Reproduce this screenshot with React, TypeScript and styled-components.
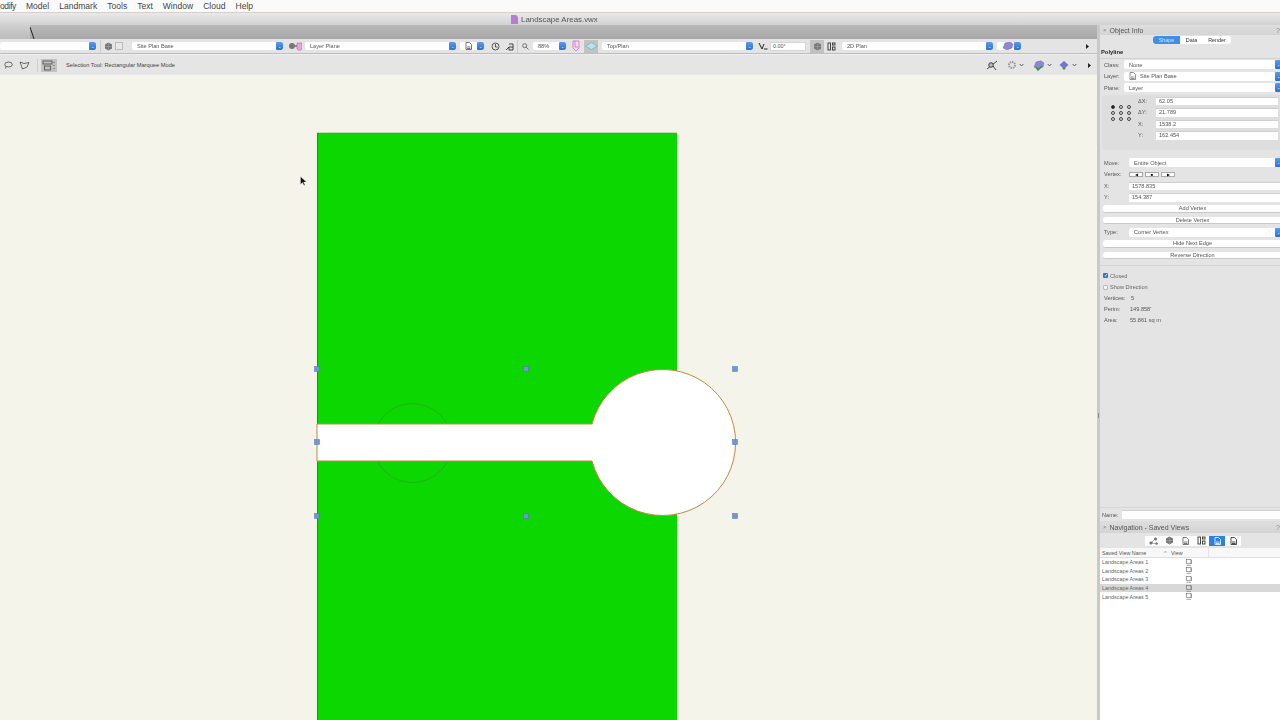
import React from 'react';
import styled, { createGlobalStyle } from 'styled-components';

const GlobalStyle = createGlobalStyle`
  html, body {
    margin: 0;
    padding: 0;
    width: 1280px;
    height: 720px;
    overflow: hidden;
    background: #f5f4ea;
    font-family: "Liberation Sans", Arial, sans-serif;
    color: #333;
  }
  * { box-sizing: border-box; }
`;

const Root = styled.div`
  width: 1280px;
  height: 720px;
  display: flex;
  flex-direction: column;
  overflow: hidden;
  filter: blur(0.35px);
`;

const MenuBar = styled.div`
  height: 12px;
  flex: none;
  display: flex;
  align-items: center;
  gap: 10px;
  background: #fbfafa;
  font-size: 8.5px;
  color: #444;
`;

const MenuItem = styled.span<{ $tight?: boolean }>`
  letter-spacing: ${p => (p.$tight ? '-0.4px' : '0.02px')};
`;

const TitleBar = styled.div`
  height: 13px;
  flex: none;
  display: flex;
  align-items: center;
  gap: 3px;
  padding-left: 511px;
  border-top: 1px solid #d6d0cd;
  background: linear-gradient(#e9e9e9, #d2d2d2);
  font-size: 7.9px;
  color: #555;
`;

const Main = styled.div`
  flex: 1;
  display: flex;
  min-height: 0;
`;

const Workspace = styled.div`
  width: 1097px;
  flex: none;
  display: flex;
  flex-direction: column;
`;

const TabStrip = styled.div`
  height: 14px;
  flex: none;
  display: flex;
  background: linear-gradient(#b9b9b9, #a7a7a7);
`;

const ActiveTab = styled.div`
  width: 30px;
  background: linear-gradient(#cfcfcf, #bcbcbc);
`;

const ViewBar = styled.div`
  height: 15px;
  flex: none;
  display: flex;
  align-items: center;
  background: #e4e4e4;
  border-bottom: 1px solid #bdbdbd;
`;

const ModeBar = styled.div`
  height: 21px;
  flex: none;
  display: flex;
  align-items: center;
  background: #e5e5e5;
  border-top: 1px solid #efefef;
`;

const Hint = styled.span`
  margin-left: 9px;
  font-size: 5.7px;
  color: #444;
  white-space: nowrap;
`;

const Spacer = styled.div`
  flex: 1;
`;

const Slot = styled.div<{ $ml?: number; $w: number; $active?: boolean }>`
  flex: none;
  display: flex;
  align-items: center;
  justify-content: center;
  width: ${p => p.$w}px;
  height: 13px;
  margin-left: ${p => p.$ml ?? 0}px;
  background: ${p => (p.$active ? '#c2c2c2' : 'transparent')};
`;

const Divider = styled.div<{ $ml: number }>`
  width: 1px;
  height: 13px;
  flex: none;
  margin-left: ${p => p.$ml}px;
  background: #cdcdcd;
`;

const Select = styled.div<{ $w: number; $ml?: number }>`
  flex: none;
  display: flex;
  align-items: center;
  width: ${p => p.$w}px;
  height: 8.5px;
  margin-left: ${p => p.$ml ?? 0}px;
  padding-left: 5px;
  border-radius: 2px;
  overflow: hidden;
  background: #fff;
  font-size: 5.6px;
  color: #555;
  white-space: nowrap;
`;

const SelectText = styled.span`
  flex: 1;
  display: flex;
  align-items: center;
`;

const Stepper = styled.span`
  flex: none;
  width: 7px;
  align-self: stretch;
  display: flex;
  align-items: center;
  justify-content: center;
  border-radius: 1px;
  background: linear-gradient(#5a9be8, #2e72d0);
  color: #fff;
  font-size: 4px;
`;

const PlainInput = styled.div<{ $w: number; $ml?: number }>`
  flex: none;
  width: ${p => p.$w}px;
  height: 9px;
  margin-left: ${p => p.$ml ?? 0}px;
  padding-left: 2px;
  background: #fff;
  border: 1px solid #d5d5d5;
  font-size: 5.4px;
  line-height: 7px;
  color: #555;
`;

const Canvas = styled.div`
  flex: 1;
  min-height: 0;
  background: #f5f4ea;
`;

const Drawing = styled.svg`
  display: block;
`;

const Sash = styled.div`
  width: 3px;
  flex: none;
  display: flex;
  align-items: center;
  justify-content: center;
  padding-top: 86px;
  background: #c9c9c9;
`;

const SashGrip = styled.span`
  width: 1px;
  height: 5px;
  background: #8f8f8f;
`;

const Palettes = styled.div`
  width: 180px;
  flex: none;
  display: flex;
  flex-direction: column;
  overflow: hidden;
  background: #e4e4e4;
`;

const PaletteHead = styled.div<{ $h: number }>`
  height: ${p => p.$h}px;
  flex: none;
  display: flex;
  align-items: center;
  gap: 3px;
  padding-left: 3px;
  background: linear-gradient(#dedede, #d4d4d4);
  font-size: 7px;
  color: #555;
`;

const CloseMark = styled.span`
  font-size: 6px;
  color: #888;
`;

const HelpMark = styled.span`
  margin-left: auto;
  color: #8a8a8a;
`;

const InfoBody = styled.div`
  width: 182px;
  flex: 1;
  min-height: 0;
  display: flex;
  flex-direction: column;
`;

const SegmentRow = styled.div`
  flex: none;
  display: flex;
  align-items: center;
  height: 10px;
  padding-left: 53px;
`;

const Segments = styled.div`
  display: flex;
  height: 8px;
  border-radius: 3px;
  overflow: hidden;
  background: #fff;
  font-size: 5.4px;
  line-height: 8px;
  text-align: center;
  color: #333;
`;

const Segment = styled.span<{ $w: number; $on?: boolean }>`
  width: ${p => p.$w}px;
  background: ${p => (p.$on ? '#3f8fe6' : 'transparent')};
  color: ${p => (p.$on ? '#cfe4fa' : '#333')};
`;

const ShapeName = styled.div`
  height: 12px;
  flex: none;
  margin-top: 2px;
  padding: 2px 0 0 1px;
  border-bottom: 1px solid #d2d2d2;
  font-size: 5.8px;
  font-weight: bold;
  color: #222;
`;

const PropRow = styled.div<{ $h?: number }>`
  flex: none;
  display: flex;
  align-items: center;
  height: ${p => p.$h ?? 11.5}px;
  padding-left: 4px;
  font-size: 5.6px;
  color: #555;
  white-space: nowrap;
`;

const PropLabel = styled.span<{ $w: number }>`
  flex: none;
  width: ${p => p.$w}px;
`;

const Field = styled.div<{ $w: number }>`
  flex: none;
  width: ${p => p.$w}px;
  height: 8.5px;
  padding-left: 3px;
  background: #fff;
  border-top: 1px solid #cfcfcf;
  line-height: 7px;
  color: #555;
`;

const PropSelect = styled(Select)`
  flex: 1;
  width: auto;
  height: 9px;
  padding-left: 5px;
`;

const SelectIcon = styled.span`
  display: flex;
  margin-right: 4px;
`;

const GroupBox = styled.div`
  height: 55px;
  flex: none;
  display: flex;
  margin: 1.5px 0 7px 2px;
  background: #dedede;
  border-radius: 2px;
`;

const AlignGrid = styled.div`
  flex: none;
  width: 36px;
  display: grid;
  grid-template-columns: repeat(3, 4px);
  grid-auto-rows: 4px;
  gap: 2px 4px;
  align-content: start;
  padding: 10px 0 0 9px;
`;

const AlignDot = styled.span<{ $on?: boolean }>`
  width: 4px;
  height: 4px;
  border-radius: 50%;
  border: 0.8px solid #444;
  background: ${p => (p.$on ? '#111' : 'transparent')};
`;

const Coords = styled.div`
  flex: 1;
`;

const CoordRow = styled(PropRow)`
  padding-left: 0;
`;

const VertexButtons = styled.div`
  display: flex;
  gap: 2px;
`;

const VertexButton = styled.span`
  width: 14px;
  height: 5.5px;
  display: flex;
  align-items: center;
  justify-content: center;
  background: #fff;
  border: 0.5px solid #aaa;
  font-size: 4px;
  color: #111;
`;

const WideButton = styled.div`
  flex: none;
  height: 7.5px;
  margin: 2.2px 0 2px 3px;
  width: 179px;
  border-radius: 3px;
  background: #fff;
  border-bottom: 1px solid #c8c8c8;
  font-size: 5.6px;
  line-height: 7px;
  text-align: center;
  color: #555;
`;

const Rule = styled.div`
  flex: none;
  height: 1px;
  margin: 4px 0;
  background: #d4d4d4;
`;

const CheckRow = styled.div`
  flex: none;
  display: flex;
  align-items: center;
  gap: 2px;
  height: 11.3px;
  padding-left: 3px;
  font-size: 5.6px;
  color: #666;
`;

const CheckBox = styled.span<{ $on?: boolean }>`
  width: 5px;
  height: 5px;
  display: flex;
  align-items: center;
  justify-content: center;
  border-radius: 1px;
  background: ${p => (p.$on ? '#2f78d2' : '#f6f6f6')};
  border: ${p => (p.$on ? 'none' : '0.5px solid #bbb')};
  color: #fff;
  font-size: 4.5px;
`;

const Filler = styled.div`
  flex: 1;
`;

const NameRow = styled(PropRow)`
  height: 14px;
  padding-left: 2px;
  border-top: 1px solid #d6d6d6;
`;

const NavBody = styled.div`
  flex: none;
  height: 187px;
  display: flex;
  flex-direction: column;
  background: #fff;
`;

const NavTools = styled.div`
  height: 15px;
  flex: none;
  display: flex;
  align-items: center;
  padding-left: 45px;
  background: #e4e4e4;
`;

const NavButton = styled.span<{ $on?: boolean }>`
  width: 16px;
  height: 10px;
  display: flex;
  align-items: center;
  justify-content: center;
  background: ${p => (p.$on ? '#2f80e4' : '#fff')};
`;

const TableHead = styled.div`
  height: 10px;
  flex: none;
  display: flex;
  align-items: center;
  padding-left: 2px;
  background: #f8f8f8;
  border-bottom: 1px solid #e0e0e0;
  font-size: 5.4px;
  color: #555;
`;

const NameCol = styled.span`
  width: 62px;
  flex: none;
`;

const SortMark = styled.span`
  width: 7px;
  flex: none;
  color: #777;
`;

const ViewCol = styled.span`
  width: 38px;
  flex: none;
  height: 100%;
  line-height: 10px;
  border-right: 1px solid #e4e4e4;
`;

const ViewRow = styled.div<{ $on?: boolean }>`
  height: 8.6px;
  flex: none;
  display: flex;
  align-items: center;
  padding-left: 2px;
  background: ${p => (p.$on ? '#d8d8d8' : '#fff')};
  font-size: 5.4px;
  color: #666;
`;

const RowName = styled.span`
  width: 84px;
  flex: none;
`;

const MENU = ['Model', 'Landmark', 'Tools', 'Text', 'Window', 'Cloud', 'Help'];
const VIEWS = [1, 2, 3, 4, 5];
const HANDLES = [
  [317, 294], [526, 294], [735, 294],
  [317, 367], [735, 367],
  [317, 441], [526, 441], [735, 441],
];
const DELTAS = [
  ['ΔX:', '62.05'],
  ['ΔY:', '21.789'],
  ['X:', '1538.2'],
  ['Y:', '162.454'],
];

const Sheet = ({ color = '#555' }: { color?: string }) => (
  <svg width="7" height="8" viewBox="0 0 7 8" fill="none" stroke={color} strokeWidth="0.8">
    <path d="M1 .5h3.5L6.5 2.5v5H1z" />
    <path d="M2 5h3.5M2 6.5h3.5" />
  </svg>
);

const ViewMark = () => (
  <svg width="6" height="7" viewBox="0 0 6 7" fill="none" stroke="#666" strokeWidth="0.6">
    <rect x=".5" y=".5" width="4.5" height="4" />
    <path d="M.5 6.3h4.5M5.4 1v4" />
  </svg>
);

const Globe = () => (
  <svg width="9" height="9" viewBox="0 0 9 9">
    <path d="M4.5.5 8 2.5v4L4.5 8.5 1 6.5v-4z" fill="#777" />
    <path d="M1 4.5h7M4.5.5v8" stroke="#aaa" strokeWidth="0.5" />
  </svg>
);

const Grid = () => (
  <svg width="9" height="9" viewBox="0 0 9 9" fill="none" stroke="#333" strokeWidth="0.9">
    <rect x="1" y="1" width="2.5" height="7" />
    <rect x="5.5" y="1" width="2.5" height="2" />
    <rect x="5.5" y="5" width="2.5" height="3" />
  </svg>
);

const Nodes = () => (
  <svg width="9" height="8" viewBox="0 0 9 8" fill="#777" stroke="#777" strokeWidth="0.6">
    <path d="M2 6 6 2M2 6l5 .5" fill="none" />
    <circle cx="2" cy="6" r="1.3" />
    <circle cx="6.5" cy="2" r="1.3" />
    <circle cx="7.5" cy="6.5" r="1" />
  </svg>
);

const Blob = ({ fill, check }: { fill: string; check?: boolean }) => (
  <svg width="12" height="11" viewBox="0 0 12 11">
    <path d="M3 2 8 .8 11 3 10 7 5 9 1 7z" fill={fill} stroke="#5d5d80" strokeWidth="0.4" />
    {check && <path d="M3 7l2 3 4-4" fill="none" stroke="#2f9a3c" strokeWidth="1.5" />}
  </svg>
);

const Chevron = () => (
  <svg width="5" height="4" viewBox="0 0 5 4" fill="none" stroke="#444" strokeWidth="0.8">
    <path d="M.7 1 2.5 3 4.3 1" />
  </svg>
);

const RightArrow = () => (
  <svg width="3" height="5" viewBox="0 0 3 5"><path d="M0 0 3 2.5 0 5z" fill="#222" /></svg>
);

const Pick = ({ w, ml, children }: { w: number; ml?: number; children: React.ReactNode }) => (
  <Select $w={w} $ml={ml}>
    <SelectText>{children}</SelectText>
    <Stepper>⌄</Stepper>
  </Select>
);

const Prop = ({ label, value, icon, lw = 20 }: { label: string; value: string; icon?: boolean; lw?: number }) => (
  <PropRow>
    <PropLabel $w={lw}>{label}</PropLabel>
    <PropSelect $w={0}>
      {icon && <SelectIcon><Sheet color="#777" /></SelectIcon>}
      <SelectText>{value}</SelectText>
      <Stepper>⌄</Stepper>
    </PropSelect>
  </PropRow>
);

const App = () => (
  <>
    <GlobalStyle />
    <Root>
      <MenuBar>
        <MenuItem $tight>odify</MenuItem>
        {MENU.map(m => <MenuItem key={m}>{m}</MenuItem>)}
      </MenuBar>
      <TitleBar>
        <svg width="7" height="9" viewBox="0 0 7 9"><path d="M0 0h5l2 2v7H0z" fill="#b57ccf" /></svg>
        Landscape Areas.vwx
      </TitleBar>
      <Main>
        <Workspace>
          <TabStrip>
            <ActiveTab />
            <svg width="6" height="14" viewBox="0 0 6 14">
              <path d="M0 2 4 14" stroke="#222" strokeWidth="1" />
            </svg>
          </TabStrip>
          <ViewBar>
            <Pick w={96}>{''}</Pick>
            <Divider $ml={4} />
            <Slot $w={9} $ml={3}><Globe /></Slot>
            <Slot $w={9} $ml={1}>
              <svg width="8" height="8" viewBox="0 0 8 8"><rect x=".5" y=".5" width="7" height="7" fill="#e9e9e9" stroke="#bbb" /></svg>
            </Slot>
            <Pick w={151} ml={9}>Site Plan Base</Pick>
            <Slot $w={14} $ml={5}>
              <svg width="14" height="9" viewBox="0 0 14 9">
                <circle cx="4" cy="4" r="3" fill="#777" />
                <path d="M7 4h3" stroke="#333" />
                <path d="M9 1h5v6l-2.5 2L9 7z" fill="#eaa6d8" stroke="#c25fa8" strokeWidth="0.6" />
              </svg>
            </Slot>
            <Pick w={151} ml={3}>Layer Plane</Pick>
            <Select $w={24} $ml={4}>
              <SelectText><Sheet /></SelectText>
              <Stepper>⌄</Stepper>
            </Select>
            <Slot $w={9} $ml={7}>
              <svg width="9" height="9" viewBox="0 0 9 9" fill="none" stroke="#333" strokeWidth="0.8"><circle cx="4.5" cy="4.5" r="3.5" /><path d="M4.5 2v3h2" /></svg>
            </Slot>
            <Slot $w={9} $ml={5}>
              <svg width="9" height="9" viewBox="0 0 9 9" fill="none" stroke="#333" strokeWidth="0.9"><path d="M1 8 4 5M4 2h4v3M4 5h4v3H4z" /></svg>
            </Slot>
            <Divider $ml={3} />
            <Slot $w={8} $ml={3}>
              <svg width="7" height="7" viewBox="0 0 7 7" fill="none" stroke="#666" strokeWidth="0.9"><circle cx="2.7" cy="2.7" r="2" /><path d="M4.2 4.2 6.5 6.5" /></svg>
            </Slot>
            <Pick w={33} ml={4}>88%</Pick>
            <Slot $w={8} $ml={6}>
              <svg width="8" height="12" viewBox="0 0 8 12" fill="#f7dcef" stroke="#cf6cbc" strokeWidth="0.8"><path d="M1 1h6v7L4 11 1 8z" /><path d="M3 1v6h3" /></svg>
            </Slot>
            <Slot $w={14} $ml={4} $active>
              <svg width="13" height="8" viewBox="0 0 13 8" fill="#bfe0e6" stroke="#63b2c4" strokeWidth="0.7"><path d="M6.5.5 12.5 4 6.5 7.5.5 4z" /></svg>
            </Slot>
            <Pick w={151} ml={4}>Top/Plan</Pick>
            <Slot $w={10} $ml={5}>
              <svg width="10" height="8" viewBox="0 0 10 8" fill="none" stroke="#222" strokeWidth="1"><path d="M1 1 4 7 6 2M6 7h3.5" /></svg>
            </Slot>
            <PlainInput $w={36} $ml={2}>0.00°</PlainInput>
            <Slot $w={14} $ml={4} $active><Globe /></Slot>
            <Slot $w={9} $ml={3}><Grid /></Slot>
            <Pick w={151} ml={6}>2D Plan</Pick>
            <Select $w={24} $ml={4}>
              <SelectText><Blob fill="#8f86d8" /></SelectText>
              <Stepper>⌄</Stepper>
            </Select>
            <Spacer />
            <RightArrow />
            <Slot $w={8} />
          </ViewBar>
          <ModeBar>
            <Slot $w={9} $ml={4}>
              <svg width="9" height="8" viewBox="0 0 9 8" fill="none" stroke="#333" strokeWidth="0.7"><ellipse cx="4.5" cy="3.5" rx="3.8" ry="2.5" /><path d="M2 5.5 1.5 7.5" /></svg>
            </Slot>
            <Slot $w={11} $ml={6}>
              <svg width="11" height="9" viewBox="0 0 11 9" fill="none" stroke="#333" strokeWidth="0.7"><path d="M1 1 5 2.5 10 1.5 8 6 3.5 8z" /></svg>
            </Slot>
            <Divider $ml={7} />
            <Slot $w={16} $ml={3} $active>
              <svg width="14" height="11" viewBox="0 0 14 11" fill="none" stroke="#555" strokeWidth="0.9">
                <rect x="1" y="1" width="9" height="3" />
                <rect x="2.5" y="6" width="6" height="4" />
                <path d="M12 2v1M12 5v1M12 8v1" />
              </svg>
            </Slot>
            <Hint>Selection Tool: Rectangular Marquee Mode</Hint>
            <Spacer />
            <Slot $w={12}>
              <svg width="12" height="12" viewBox="0 0 12 12" fill="none" stroke="#333" strokeWidth="0.9">
                <path d="M1 10 11 2" /><circle cx="5" cy="6" r="2.3" fill="#bbb" /><path d="M7 7l3 4" />
              </svg>
            </Slot>
            <Slot $w={10} $ml={9}>
              <svg width="10" height="10" viewBox="0 0 10 10">
                <circle cx="5" cy="5" r="3" fill="none" stroke="#999" strokeWidth="2" strokeDasharray="1.5 .8" />
              </svg>
            </Slot>
            <Slot $w={6} $ml={1}><Chevron /></Slot>
            <Slot $w={12} $ml={9}><Blob fill="#8f86d8" check /></Slot>
            <Slot $w={6} $ml={1}><Chevron /></Slot>
            <Slot $w={12} $ml={6}>
              <svg width="10" height="11" viewBox="0 0 10 11">
                <path d="M5 1 9.5 5 5 9 .5 5z" fill="#6f76d0" />
                <path d="M3 8l2 2 2-2" fill="#3e9b46" />
              </svg>
            </Slot>
            <Slot $w={6} $ml={1}><Chevron /></Slot>
            <Slot $w={6} $ml={9}><RightArrow /></Slot>
            <Slot $w={5} />
          </ModeBar>
          <Canvas>
            <Drawing width="1097" height="645" viewBox="0 0 1097 645">
              <rect x="317" y="58" width="360" height="587" fill="#0dd700" />
              <path d="M317.5 58v587" stroke="#2c8a1c" strokeWidth="1" />
              <path d="M317 58h360" stroke="#2c9a1c" strokeWidth="0.5" />
              <circle cx="412.5" cy="368" r="39.5" fill="none" stroke="#2b8f3a" strokeWidth="0.5" />
              <path
                d="M317 349H592A73 73 0 1 1 592 386H317Z"
                fill="#fff"
                stroke="#c08a3e"
                strokeWidth="1"
              />
              {HANDLES.map(([x, y]) => (
                <rect key={`${x}-${y}`} x={x - 2.5} y={y - 2.5} width="5" height="5" fill="#6f97d8" stroke="#4d74b4" strokeWidth="0.5" />
              ))}
              <path d="M300.5 101.5v8l2-2 1.5 3 1-.6-1.4-2.8h2.8z" fill="#111" stroke="#fff" strokeWidth="0.3" />
            </Drawing>
          </Canvas>
        </Workspace>
        <Sash><SashGrip /></Sash>
        <Palettes>
          <PaletteHead $h={10}>
            <CloseMark>×</CloseMark>
            Object Info
            <HelpMark>?</HelpMark>
          </PaletteHead>
          <InfoBody>
            <SegmentRow>
              <Segments>
                <Segment $w={27} $on>Shape</Segment>
                <Segment $w={23}>Data</Segment>
                <Segment $w={28}>Render</Segment>
              </Segments>
            </SegmentRow>
            <ShapeName>Polyline</ShapeName>
            <Prop label="Class:" value="None" />
            <Prop label="Layer:" value="Site Plan Base" icon />
            <Prop label="Plane:" value="Layer" />
            <GroupBox>
              <AlignGrid>
                {Array.from({ length: 9 }, (_, i) => <AlignDot key={i} $on={i === 0} />)}
              </AlignGrid>
              <Coords>
                {DELTAS.map(([label, value]) => (
                  <CoordRow key={label}>
                    <PropLabel $w={18}>{label}</PropLabel>
                    <Field $w={122}>{value}</Field>
                  </CoordRow>
                ))}
              </Coords>
            </GroupBox>
            <Prop label="Move:" value="Entire Object" lw={25} />
            <PropRow>
              <PropLabel $w={25}>Vertex:</PropLabel>
              <VertexButtons>
                <VertexButton>◀</VertexButton>
                <VertexButton>■</VertexButton>
                <VertexButton>▶</VertexButton>
              </VertexButtons>
            </PropRow>
            <PropRow><PropLabel $w={25}>X:</PropLabel><Field $w={155}>1578.835</Field></PropRow>
            <PropRow><PropLabel $w={25}>Y:</PropLabel><Field $w={155}>154.387</Field></PropRow>
            <WideButton>Add Vertex</WideButton>
            <WideButton>Delete Vertex</WideButton>
            <Prop label="Type:" value="Corner Vertex" lw={25} />
            <WideButton>Hide Next Edge</WideButton>
            <WideButton>Reverse Direction</WideButton>
            <Rule />
            <CheckRow><CheckBox $on>✓</CheckBox>Closed</CheckRow>
            <CheckRow><CheckBox />Show Direction</CheckRow>
            <PropRow $h={11}><PropLabel $w={27}>Vertices:</PropLabel>5</PropRow>
            <PropRow $h={11}><PropLabel $w={26}>Perim:</PropLabel>149.858'</PropRow>
            <PropRow $h={11}><PropLabel $w={26}>Area:</PropLabel>55.861 sq m</PropRow>
            <Filler />
            <NameRow><PropLabel $w={20}>Name:</PropLabel><Field $w={160} /></NameRow>
          </InfoBody>
          <PaletteHead $h={12}>
            <CloseMark>×</CloseMark>
            Navigation - Saved Views
            <HelpMark>?</HelpMark>
          </PaletteHead>
          <NavBody>
            <NavTools>
              <NavButton><Nodes /></NavButton>
              <NavButton><Globe /></NavButton>
              <NavButton><Sheet /></NavButton>
              <NavButton><Grid /></NavButton>
              <NavButton $on><Sheet color="#fff" /></NavButton>
              <NavButton><Sheet color="#222" /></NavButton>
            </NavTools>
            <TableHead>
              <NameCol>Saved View Name</NameCol>
              <SortMark>^</SortMark>
              <ViewCol>View</ViewCol>
            </TableHead>
            {VIEWS.map(n => (
              <ViewRow key={n} $on={n === 4}>
                <RowName>Landscape Areas {n}</RowName>
                <ViewMark />
              </ViewRow>
            ))}
          </NavBody>
        </Palettes>
      </Main>
    </Root>
  </>
);

export default App;
